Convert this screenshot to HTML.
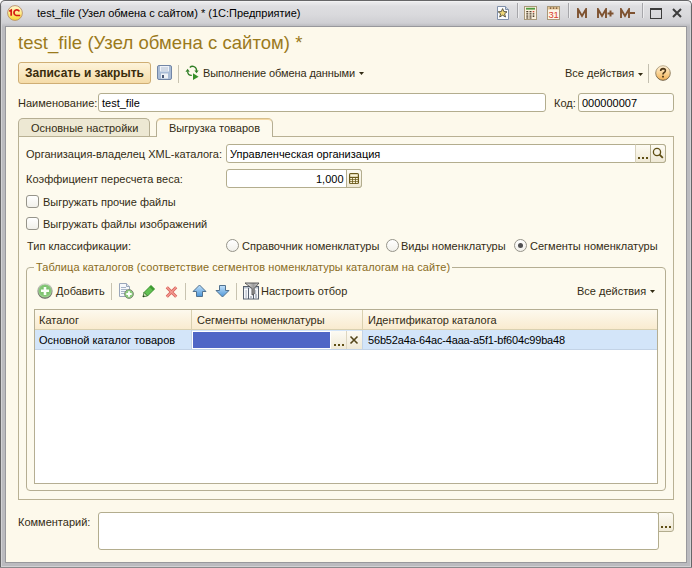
<!DOCTYPE html>
<html><head><meta charset="utf-8">
<style>
*{box-sizing:border-box;margin:0;padding:0}
html,body{width:692px;height:568px;overflow:hidden;background:#fff}
body{position:relative;font-family:"Liberation Sans",sans-serif;font-size:11px;color:#332c14}
.a{position:absolute;white-space:nowrap;line-height:13px}
#win{position:absolute;left:0;top:0;width:692px;height:568px;border-radius:5px 5px 0 0;background:linear-gradient(#fafafa 0px,#eaeaec 1px,#e6e6e8 3px,#dedee1 5px,#d9d9dc 14px,#cfcfd3 22px,#c2c2c6 24px,#bbbbbf 26px,#bbbbbf 100%);border:1px solid #666668;border-bottom:none}
#win:after{content:"";position:absolute;left:0;top:5px;right:0;bottom:0;border-left:1px solid #d2d2d4;border-right:1px solid #d2d2d4}
#content{position:absolute;left:5px;top:26px;width:682px;height:537px;background:#fdf9eb;border:1px solid #98989c}
.inp{position:absolute;background:#fff;border:1px solid #b3ad8e;border-radius:3px}
.sep{position:absolute;width:1px;background:#c8c3b0}
.btn{position:absolute;background:linear-gradient(#fdfbf3,#efe9d6);border:1px solid #b3ad8e}
.tsep{position:absolute;width:1px;height:13px;background:#a6a6aa;top:7px;box-shadow:1px 0 #ececee}
.cb{position:absolute;width:13px;height:13px;border:1px solid #96948a;border-radius:3px;background:linear-gradient(#ffffff,#f1f0ea)}
.rb{position:absolute;width:13px;height:13px;border:1px solid #96948a;border-radius:50%;background:linear-gradient(#ffffff,#f1f0ea)}
.dots{position:absolute;width:2px;height:2px;background:#5e4e14;box-shadow:4px 0 #5e4e14,8px 0 #5e4e14}
</style></head><body>
<div id="win"></div>
<!-- title bar -->
<svg class="a" style="left:7px;top:5px" width="16" height="16" viewBox="0 0 16 16"><defs><linearGradient id="lg" x1="0" y1="0" x2="0" y2="1"><stop offset="0" stop-color="#fff6d0"/><stop offset="0.5" stop-color="#ffec8a"/><stop offset="1" stop-color="#f6d630"/></linearGradient></defs><circle cx="8" cy="8" r="7.4" fill="url(#lg)" stroke="#b88e6c" stroke-width="0.9"/><path d="M2.2 6.2 L4.2 5.2 V10.8" stroke="#d41c14" stroke-width="1.7" fill="none"/><path d="M12.4 6.4 Q11.2 4.6 9 5 Q6.8 5.6 7 8.1 Q7.3 10.3 9.2 10.5 L13.2 10.5" stroke="#d41c14" stroke-width="1.7" fill="none"/></svg>
<div class="a" style="left:37px;top:7px;font-size:11px;color:#000">test_file (Узел обмена с сайтом) * (1С:Предприятие)</div>

<!-- title bar right icons -->
<svg class="a" style="left:497px;top:6px" width="13" height="14" viewBox="0 0 13 14"><path d="M0.5 0.5 H8.5 L11.5 3.5 V13.5 H0.5 Z" fill="#fbfcfe" stroke="#8090aa"/><path d="M8.5 0.5 V3.5 H11.5" fill="#c8d4e4" stroke="#8090aa"/><path d="M5.6 2.6 L6.9 5.6 L10 5.8 L7.6 7.8 L8.5 11 L5.6 9.2 L2.7 11 L3.6 7.8 L1.2 5.8 L4.3 5.6 Z" fill="#f0d878" stroke="#4e4a38" stroke-width="0.9" stroke-linejoin="round"/></svg>
<div class="tsep" style="left:517px;top:3px;height:15px"></div>
<svg class="a" style="left:524px;top:6px" width="13" height="14" viewBox="0 0 13 14"><rect x="0.5" y="0.5" width="12" height="13" fill="#fbf1de" stroke="#a8987a"/><rect x="2" y="1.8" width="9" height="1.8" fill="#4f9a3e"/><g fill="#4e3e2c"><rect x="2.3" y="5" width="2" height="1.3"/><rect x="5.5" y="5" width="2" height="1.3"/><rect x="2.3" y="7.2" width="2" height="1.3"/><rect x="5.5" y="7.2" width="2" height="1.3"/><rect x="8.7" y="7.2" width="1.6" height="1.3"/><rect x="2.3" y="9.4" width="2" height="1.3"/><rect x="5.5" y="9.4" width="2" height="1.3"/><rect x="8.7" y="9.4" width="1.6" height="1.6"/><rect x="2.3" y="11.4" width="2" height="1.2"/><rect x="5.5" y="11.4" width="2" height="1.2"/></g><rect x="8.7" y="5" width="1.6" height="1.3" fill="#d04a3a"/></svg>
<svg class="a" style="left:547px;top:6px" width="13" height="14" viewBox="0 0 13 14"><rect x="0.5" y="0.5" width="12" height="13" fill="#fdf5e8" stroke="#a8987a"/><rect x="1" y="1" width="11" height="2.5" fill="#e6c696"/><g fill="#5a3a20"><rect x="2.8" y="1.5" width="1.5" height="1.2"/><rect x="5.8" y="1.5" width="1.5" height="1.2"/><rect x="8.8" y="1.5" width="1.5" height="1.2"/></g><text x="6.6" y="11.8" font-family="Liberation Sans" font-size="9.5" fill="#d8402e" text-anchor="middle" letter-spacing="-0.3">31</text></svg>
<div class="tsep" style="left:568px;top:3px;height:15px"></div>
<svg class="a" style="left:577px;top:8px" width="10" height="10" viewBox="0 0 10 10"><path d="M1 10 V1.2 L5 8 L9 1.2 V10" stroke="#7e5230" stroke-width="1.9" fill="none" stroke-linejoin="miter" stroke-miterlimit="10"/></svg>
<svg class="a" style="left:597px;top:8px" width="10" height="10" viewBox="0 0 10 10"><path d="M1 10 V1.2 L5 8 L9 1.2 V10" stroke="#7e5230" stroke-width="1.9" fill="none" stroke-linejoin="miter" stroke-miterlimit="10"/></svg>
<svg class="a" style="left:607px;top:10px" width="7" height="7" viewBox="0 0 7 7"><path d="M3.5 0.5 V6.5 M0.5 3.5 H6.5" stroke="#7e5230" stroke-width="2"/></svg>
<svg class="a" style="left:620px;top:8px" width="10" height="10" viewBox="0 0 10 10"><path d="M1 10 V1.2 L5 8 L9 1.2 V10" stroke="#7e5230" stroke-width="1.9" fill="none" stroke-linejoin="miter" stroke-miterlimit="10"/></svg>
<div class="a" style="left:630px;top:12px;width:5px;height:2px;background:#7e5230"></div>
<div class="tsep" style="left:642px;top:3px;height:15px"></div>
<div class="a" style="left:650px;top:8px;width:12px;height:11px;border:1px solid #3c3c3c;border-top-width:2px"></div>
<svg class="a" style="left:672px;top:8px" width="10" height="10" viewBox="0 0 10 10"><path d="M1 1 L9 9 M9 1 L1 9" stroke="#3c3c3c" stroke-width="2"/></svg>

<div id="content"></div>
<div class="a" style="left:1px;top:566px;width:690px;height:1px;background:#d2d2d4"></div>
<div class="a" style="left:0;top:567px;width:692px;height:1px;background:#8a8a8c"></div>
<!-- header -->
<div class="a" style="left:18px;top:33px;font-size:18.5px;line-height:20px;color:#9b7a1c;letter-spacing:0.05px">test_file (Узел обмена с сайтом) *</div>

<!-- toolbar -->
<div class="a" style="left:18px;top:62px;width:133px;height:22px;border:1px solid #cfae74;border-radius:3px;background:linear-gradient(#fdf3da,#f5dca8)"></div>
<div class="a" style="left:25px;top:66px;font:bold 12px 'Liberation Sans';color:#3a2c0c">Записать и закрыть</div>
<svg class="a" style="left:157px;top:65px" width="15" height="15" viewBox="0 0 15 15"><rect x="0.5" y="0.5" width="14" height="14" rx="1.5" fill="#a9bcd6" stroke="#7286a6"/><rect x="3" y="1" width="9" height="5.5" fill="#eef2f8"/><path d="M4 3 H11 M4 5 H11" stroke="#b4c0d2" stroke-width="1"/><rect x="4" y="8.5" width="7" height="5" fill="#eef1f5"/><rect x="5" y="10" width="2" height="3" fill="#4a5a78"/></svg>
<div class="sep" style="left:178px;top:65px;height:18px"></div>
<svg class="a" style="left:184px;top:64px" width="16" height="17" viewBox="0 0 16 17"><path d="M5.8 3.4 A4 4 0 0 1 12.5 6.8" stroke="#2e7d24" stroke-width="1.3" fill="none"/><path d="M10.4 6.6 L14.6 6.6 L12.5 9.2 Z" fill="#2e7d24"/><path d="M3.6 7.8 A4 4 0 0 0 7.8 11.4" stroke="#2e7d24" stroke-width="1.3" fill="none"/><path d="M1.5 7.8 L5.7 7.8 L3.6 4.8 Z" fill="#2e7d24"/><path d="M9 9.2 L9 16 L14.6 12.8 Z" fill="#368f28"/></svg>
<div class="a" style="left:203px;top:67px;color:#332c14;letter-spacing:-0.1px">Выполнение обмена данными</div>
<svg class="a" style="left:359px;top:72px" width="5" height="3"><path d="M0 0 H5 L2.5 3 Z" fill="#332c14"/></svg>

<div class="a" style="left:565px;top:67px;color:#332c14">Все действия</div>
<svg class="a" style="left:638px;top:73px" width="5" height="3"><path d="M0 0 H5 L2.5 3 Z" fill="#332c14"/></svg>
<div class="sep" style="left:648px;top:64px;height:19px;background:#c4c0b0"></div>
<svg class="a" style="left:655px;top:65px" width="16" height="16" viewBox="0 0 16 16"><defs><linearGradient id="hf" x1="0" y1="0" x2="0" y2="1"><stop offset="0" stop-color="#fff2da"/><stop offset="0.55" stop-color="#f9d08e"/><stop offset="1" stop-color="#f0ae52"/></linearGradient><linearGradient id="hs" x1="0" y1="0" x2="0" y2="1"><stop offset="0" stop-color="#c0b090"/><stop offset="1" stop-color="#6e5e44"/></linearGradient></defs><circle cx="8" cy="8" r="7.3" fill="url(#hf)" stroke="url(#hs)" stroke-width="1"/><path d="M5.6 6 Q5.8 3.6 8.1 3.6 Q10.5 3.7 10.4 5.8 Q10.3 7.1 8.9 7.8 Q8 8.3 8 9.6" stroke="#4e3818" stroke-width="1.6" fill="none"/><rect x="7.1" y="10.8" width="1.8" height="1.7" fill="#4e3818"/></svg>

<!-- name row -->
<div class="a" style="left:18px;top:97px">Наименование:</div>
<div class="inp" style="left:98px;top:93px;width:448px;height:19px"></div>
<div class="a" style="left:102px;top:97px;color:#000">test_file</div>
<div class="a" style="left:554px;top:97px">Код:</div>
<div class="inp" style="left:578px;top:93px;width:96px;height:19px;background:#fefcf6"></div>
<div class="a" style="left:582px;top:97px;color:#000">000000007</div>

<!-- tabs -->
<div class="a" style="left:18px;top:118px;width:132px;height:19px;border:1px solid #b5ae93;border-bottom:none;border-radius:5px 5px 0 0;background:#ede8d3"></div>
<div class="a" style="left:31px;top:122px">Основные настройки</div>
<div class="a" style="left:18px;top:136px;width:656px;height:364px;border:1px solid #b9b194;background:#fdfaee"></div>
<div class="a" style="left:156px;top:118px;width:117px;height:19px;border:1px solid #b5ae93;border-top:1px solid #d6bf8c;border-bottom:none;border-radius:5px 5px 0 0;background:#fdfaee;box-shadow:inset 0 1px #f6d9a4"></div>
<div class="a" style="left:169px;top:122px">Выгрузка товаров</div>

<!-- org row -->
<div class="a" style="left:26px;top:148px">Организация-владелец XML-каталога:</div>
<div class="inp" style="left:226px;top:144px;width:440px;height:19px"></div>
<div class="a" style="left:230px;top:148px;color:#000">Управленческая организация</div>
<div class="btn" style="left:635px;top:144px;width:16px;height:19px;border-left-color:#d8d2bc;border-right:none;border-top:1px solid #b3ad8e;"></div>
<div class="btn" style="left:650px;top:144px;width:16px;height:19px;border-radius:0 3px 3px 0"></div>
<div class="dots" style="left:638px;top:157px"></div>
<svg class="a" style="left:652px;top:147px" width="12" height="12" viewBox="0 0 12 12"><circle cx="5" cy="5" r="3.6" stroke="#5e4e14" stroke-width="1.3" fill="none"/><path d="M7.6 7.6 L10.8 10.8" stroke="#5e4e14" stroke-width="1.8"/></svg>

<!-- weight row -->
<div class="a" style="left:26px;top:173px">Коэффициент пересчета веса:</div>
<div class="inp" style="left:226px;top:169px;width:136px;height:19px"></div>
<div class="btn" style="left:346px;top:169px;width:16px;height:19px;border-radius:0 3px 3px 0"></div>
<div class="a" style="left:316px;top:173px;color:#000">1,000</div>
<svg class="a" style="left:349px;top:173px" width="10" height="11" viewBox="0 0 10 11"><rect x="0" y="0" width="10" height="11" rx="1.6" fill="#6b5a1c"/><rect x="1.2" y="1.2" width="7.6" height="2.6" fill="#fbf4d8"/><g fill="#fbf4d8"><rect x="1.2" y="5" width="2" height="1.3"/><rect x="4" y="5" width="2" height="1.3"/><rect x="6.8" y="5" width="2" height="1.3"/><rect x="1.2" y="7" width="2" height="1.3"/><rect x="4" y="7" width="2" height="1.3"/><rect x="6.8" y="7" width="2" height="1.3"/><rect x="1.2" y="9" width="2" height="1.1"/><rect x="4" y="9" width="2" height="1.1"/><rect x="6.8" y="9" width="2" height="1.1"/></g></svg>

<!-- checkboxes -->
<div class="cb" style="left:26px;top:195px"></div>
<div class="a" style="left:43px;top:196px">Выгружать прочие файлы</div>
<div class="cb" style="left:26px;top:217px"></div>
<div class="a" style="left:43px;top:218px">Выгружать файлы изображений</div>

<!-- radios -->
<div class="a" style="left:27px;top:240px">Тип классификации:</div>
<div class="rb" style="left:226px;top:239px"></div>
<div class="a" style="left:242px;top:240px">Справочник номенклатуры</div>
<div class="rb" style="left:386px;top:239px"></div>
<div class="a" style="left:401px;top:240px">Виды номенклатуры</div>
<div class="rb" style="left:514px;top:239px"></div>
<div class="a" style="left:518px;top:243px;width:5px;height:5px;border-radius:50%;background:#505052"></div>
<div class="a" style="left:530px;top:240px">Сегменты номенклатуры</div>

<!-- group -->
<div class="a" style="left:26px;top:267px;width:640px;height:224px;border:1px solid #b5ae93;border-radius:4px"></div>
<div class="a" style="left:34px;top:261px;padding:0 2px;background:#fdfaee;color:#8a6c1c;letter-spacing:0.07px">Таблица каталогов (соответствие сегментов номенклатуры каталогам на сайте)</div>

<!-- table toolbar -->
<svg class="a" style="left:37px;top:283px" width="16" height="16" viewBox="0 0 16 16"><defs><radialGradient id="gg" cx="50%" cy="45%" r="55%"><stop offset="0" stop-color="#6cb85c"/><stop offset="0.7" stop-color="#86c878"/><stop offset="1" stop-color="#b4dca6"/></radialGradient><linearGradient id="gr" x1="0" y1="0" x2="0" y2="1"><stop offset="0" stop-color="#d4d6cc"/><stop offset="1" stop-color="#5e6258"/></linearGradient></defs><circle cx="8" cy="8" r="7.1" fill="url(#gg)" stroke="url(#gr)" stroke-width="1.1"/><path d="M8 4 V12 M4 7.8 H12" stroke="#fafff8" stroke-width="2.6"/></svg>
<div class="a" style="left:56px;top:285px">Добавить</div>
<div class="sep" style="left:111px;top:283px;height:17px"></div>
<svg class="a" style="left:119px;top:283px" width="16" height="16" viewBox="0 0 16 16"><path d="M0.5 0.5 H7.5 L10.5 3.5 V13.5 H0.5 Z" fill="#f6f8fb" stroke="#9aa6ba"/><path d="M7.5 0.5 V3.5 H10.5" fill="#dfe4ec" stroke="#9aa6ba"/><path d="M2 4.5 H7 M2 6.5 H8 M2 8.5 H6 M2 10.5 H6" stroke="#a8b4c8" stroke-width="1"/><circle cx="10" cy="11" r="4.4" fill="#8ccc7c" stroke="#7f8a78" stroke-width="1"/><path d="M10 8.3 V13.7 M7.3 11 H12.7" stroke="#fff" stroke-width="1.8"/></svg>
<svg class="a" style="left:142px;top:284px" width="14" height="14" viewBox="0 0 14 14"><path d="M9 1.5 L12.5 5 L5.5 12 L2 8.5 Z" fill="#62c052" stroke="#2f8a24" stroke-width="0.9"/><path d="M9 1.5 L12.5 5 L11 6.5 L7.5 3 Z" fill="#3d9a30"/><path d="M2 8.5 L1 12.8 L5.5 12 Z" fill="#d8e8c0" stroke="#2f6a24" stroke-width="0.8"/><path d="M1 12.8 L2.2 11.6" stroke="#203a18" stroke-width="1.2"/></svg>
<svg class="a" style="left:165px;top:286px" width="13" height="12" viewBox="0 0 13 12"><path d="M1.8 1.2 L11.2 10.8 M11.2 1.2 L1.8 10.8" stroke="#d8605a" stroke-width="3"/><path d="M1.8 1.2 L11.2 10.8 M11.2 1.2 L1.8 10.8" stroke="#f29a90" stroke-width="1.4"/></svg>
<div class="sep" style="left:185px;top:283px;height:17px"></div>
<svg class="a" style="left:192px;top:284px" width="15" height="14" viewBox="0 0 15 14"><defs><linearGradient id="ab" x1="0" y1="0" x2="0" y2="1"><stop offset="0" stop-color="#c4e2fb"/><stop offset="1" stop-color="#4a94d6"/></linearGradient></defs><path d="M7.5 1 L14 7.5 H10.5 V12.5 H4.5 V7.5 H1 Z" fill="url(#ab)" stroke="#52728f" stroke-linejoin="round"/></svg>
<svg class="a" style="left:215px;top:284px" width="15" height="14" viewBox="0 0 15 14"><defs><linearGradient id="ab2" x1="0" y1="0" x2="0" y2="1"><stop offset="0" stop-color="#c4e2fb"/><stop offset="1" stop-color="#4a94d6"/></linearGradient></defs><path d="M4.5 1.5 H10.5 V6.5 H14 L7.5 13 L1 6.5 H4.5 Z" fill="url(#ab2)" stroke="#52728f" stroke-linejoin="round"/></svg>
<div class="sep" style="left:236px;top:283px;height:17px"></div>
<svg class="a" style="left:242px;top:282px" width="18" height="18" viewBox="0 0 18 18"><defs><linearGradient id="fg" x1="0" y1="0" x2="1" y2="0"><stop offset="0" stop-color="#f4f4f4"/><stop offset="0.6" stop-color="#9a9a9a"/><stop offset="1" stop-color="#d8d8d8"/></linearGradient></defs><rect x="1.5" y="4.5" width="15" height="12.5" fill="#f6f8fb" stroke="#56606e"/><rect x="2" y="5" width="14" height="1.5" fill="#b8c0cc"/><path d="M6.5 6 V17 M11.5 6 V17" stroke="#56606e"/><g fill="#7e8898"><rect x="3.5" y="8.5" width="1.2" height="1"/><rect x="3.5" y="10.5" width="1.2" height="1"/><rect x="3.5" y="12.5" width="1.2" height="1"/><rect x="3.5" y="14.5" width="1.2" height="1"/><rect x="8" y="14.5" width="2" height="1"/><rect x="13" y="8.5" width="1.2" height="1"/><rect x="13" y="10.5" width="1.2" height="1"/><rect x="13" y="12.5" width="2" height="1"/><rect x="13" y="14.5" width="2" height="1"/></g><path d="M3 1 H17 L12.2 6.5 V12 L10 13 V6.5 Z" fill="url(#fg)" stroke="#4c4c4c" stroke-width="0.9" stroke-linejoin="round"/></svg>
<div class="a" style="left:261px;top:285px">Настроить отбор</div>
<div class="a" style="left:577px;top:285px">Все действия</div>
<svg class="a" style="left:650px;top:290px" width="5" height="3"><path d="M0 0 H5 L2.5 3 Z" fill="#332c14"/></svg>

<!-- table -->
<div class="a" style="left:34px;top:309px;width:624px;height:175px;border:1px solid #b5ae93;background:#fff"></div>
<div class="a" style="left:35px;top:310px;width:622px;height:20px;background:linear-gradient(#fdf9ee,#f9ebcf);border-bottom:1px solid #d9d0b0"></div>
<div class="a" style="left:191px;top:310px;width:1px;height:20px;background:#d9d0b0"></div>
<div class="a" style="left:362px;top:310px;width:1px;height:20px;background:#d9d0b0"></div>
<div class="a" style="left:39px;top:314px">Каталог</div>
<div class="a" style="left:197px;top:314px">Сегменты номенклатуры</div>
<div class="a" style="left:368px;top:314px">Идентификатор каталога</div>
<!-- row -->
<div class="a" style="left:35px;top:330px;width:622px;height:20px;background:#d3e5f9;border-bottom:1px solid #c3d3e6"></div>
<div class="a" style="left:191px;top:330px;width:1px;height:20px;background:#c3d3e6"></div>
<div class="a" style="left:362px;top:330px;width:1px;height:20px;background:#c3d3e6"></div>
<div class="a" style="left:39px;top:334px;color:#000">Основной каталог товаров</div>
<div class="a" style="left:192px;top:331px;width:139px;height:18px;background:#4f66c6;border:1px solid #fff"></div>
<div class="btn" style="left:331px;top:331px;width:16px;height:18px;border:none;border-right:1px solid #ddd6c0"></div>
<div class="btn" style="left:347px;top:331px;width:15px;height:18px;border:none"></div>
<div class="dots" style="left:334px;top:344px"></div>
<svg class="a" style="left:349px;top:335px" width="10" height="10" viewBox="0 0 10 10"><path d="M1.5 1.5 L8.5 8.5 M8.5 1.5 L1.5 8.5" stroke="#54461a" stroke-width="1.6"/></svg>
<div class="a" style="left:368px;top:334px;color:#000;letter-spacing:-0.17px">56b52a4a-64ac-4aaa-a5f1-bf604c99ba48</div>

<!-- comment -->
<div class="a" style="left:18px;top:516px">Комментарий:</div>
<div class="inp" style="left:98px;top:512px;width:561px;height:38px"></div>
<div class="btn" style="left:658px;top:512px;width:16px;height:20px;border-radius:0 3px 3px 0"></div>
<div class="dots" style="left:661px;top:526px"></div>

</body></html>
